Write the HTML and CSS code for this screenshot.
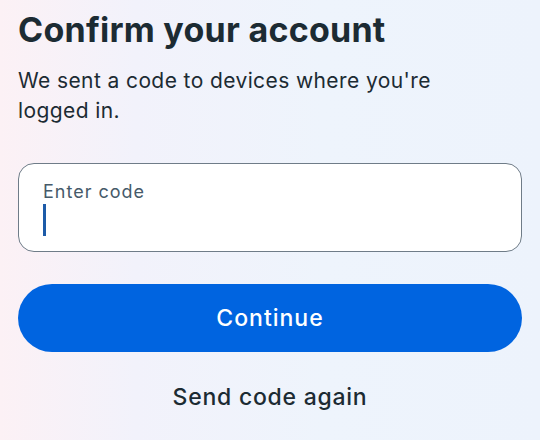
FILE: index.html
```html
<!DOCTYPE html>
<html lang="en">
<head>
<meta charset="utf-8">
<title>Confirm your account</title>
<link rel="stylesheet" href="styles.css">
</head>
<body>
<main class="page">
  <h1 class="title">Confirm your account</h1>
  <p class="lead">We sent a code to devices where you're logged in.</p>
  <label class="field">
    <span class="field-label">Enter code</span>
    <span class="caret"></span>
  </label>
  <button class="primary" type="button">Continue</button>
  <button class="link" type="button">Send code again</button>
</main>
</body>
</html>
```

FILE: styles.css
```css
html, body {
  margin: 0;
  padding: 0;
  height: 100%;
}
body {
  background: linear-gradient(90deg, #fcf1f5 0%, #f2f2fb 25%, #eef4fc 60%, #edf3fc 100%);
  font-family: Inter, "Noto Sans", sans-serif;
  color: #1c2b33;
  overflow: hidden;
}
.page {
  display: flex;
  flex-direction: column;
  padding: 0 18px;
}
.title {
  margin: 9px 0 0;
  font-size: 34px;
  line-height: 42px;
  font-weight: 700;
  letter-spacing: 0.25px;
}
.lead {
  margin: 15px 0 0;
  max-width: 470px;
  font-size: 21px;
  line-height: 30px;
  font-weight: 400;
  letter-spacing: 0.4px;
}
.field {
  margin-top: 37px;
  height: 89px;
  box-sizing: border-box;
  border: 1px solid #6f7c88;
  border-radius: 16px;
  background: #fff;
  display: flex;
  flex-direction: column;
  padding: 17px 24px 0;
}
.field-label {
  font-size: 18px;
  line-height: 22px;
  letter-spacing: 1px;
  color: #465a69;
}
.caret {
  margin-top: 1px;
  width: 3px;
  height: 32px;
  background: #1d5ba8;
}
.primary {
  margin-top: 32px;
  height: 68px;
  border: none;
  border-radius: 34px;
  background: #0064e0;
  color: #fff;
  font-family: inherit;
  font-size: 23px;
  font-weight: 500;
  letter-spacing: 1px;
  cursor: pointer;
}
.link {
  margin-top: 30px;
  align-self: center;
  background: none;
  border: none;
  padding: 0;
  font-family: inherit;
  font-size: 23px;
  line-height: 30px;
  font-weight: 500;
  letter-spacing: 0.75px;
  color: #1c2b33;
  cursor: pointer;
}
```
